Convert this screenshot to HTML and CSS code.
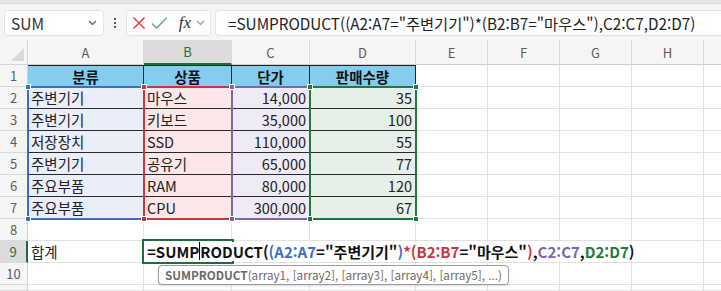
FILE: index.html
```html
<!DOCTYPE html>
<html lang="ko">

<head>
    <meta charset="UTF-8">
    <meta name="viewport" content="width=device-width, initial-scale=1.0">
    <title>SUMPRODUCT</title>
    <link rel="stylesheet" href="styles.css">
</head>

<body>
    <div class="ribbon-edge"></div>
    <div class="formula-bar">
        <div class="namebox">
            <span>SUM</span>
            <svg width="9" height="6" viewBox="0 0 9 6"><path d="M1 1l3.5 3.5L8 1" fill="none" stroke="#555" stroke-width="1.2"/></svg>
        </div>
        <div class="grip">
            <i></i><i></i><i></i>
        </div>
        <div class="fx-buttons">
            <svg width="14" height="14" viewBox="0 0 14 14"><path d="M1.5 1.5l11 11M12.5 1.5l-11 11" stroke="#e0474c" stroke-width="1.6"/></svg>
            <svg width="17" height="14" viewBox="0 0 17 14"><path d="M1 7.5l4.5 4.5L16 1.5" fill="none" stroke="#6fb089" stroke-width="1.6"/></svg>
            <span class="fx">fx</span>
            <svg width="9" height="6" viewBox="0 0 9 6"><path d="M1 1l3.5 3.5L8 1" fill="none" stroke="#999" stroke-width="1.2"/></svg>
        </div>
        <div class="formula-input">=SUMPRODUCT((A2:A7="주변기기")*(B2:B7="마우스"),C2:C7,D2:D7)</div>
    </div>

    <div class="sheet">
        <div class="corner"><span></span></div>
        <div class="col-hd">A</div>
        <div class="col-hd on">B</div>
        <div class="col-hd">C</div>
        <div class="col-hd">D</div>
        <div class="col-hd">E</div>
        <div class="col-hd">F</div>
        <div class="col-hd">G</div>
        <div class="col-hd">H</div>
        <div class="col-hd"></div>

        <div class="row-hd">1</div>
        <div class="cell th">분류</div>
        <div class="cell th">상품</div>
        <div class="cell th">단가</div>
        <div class="cell th">판매수량</div>
        <div class="cell"></div><div class="cell"></div><div class="cell"></div><div class="cell"></div><div class="cell"></div>

        <div class="row-hd">2</div>
        <div class="cell td fa">주변기기</div>
        <div class="cell td fb">마우스</div>
        <div class="cell td fc num">14,000</div>
        <div class="cell td fd num">35</div>
        <div class="cell"></div><div class="cell"></div><div class="cell"></div><div class="cell"></div><div class="cell"></div>

        <div class="row-hd">3</div>
        <div class="cell td fa">주변기기</div>
        <div class="cell td fb">키보드</div>
        <div class="cell td fc num">35,000</div>
        <div class="cell td fd num">100</div>
        <div class="cell"></div><div class="cell"></div><div class="cell"></div><div class="cell"></div><div class="cell"></div>

        <div class="row-hd">4</div>
        <div class="cell td fa">저장장치</div>
        <div class="cell td fb">SSD</div>
        <div class="cell td fc num">110,000</div>
        <div class="cell td fd num">55</div>
        <div class="cell"></div><div class="cell"></div><div class="cell"></div><div class="cell"></div><div class="cell"></div>

        <div class="row-hd">5</div>
        <div class="cell td fa">주변기기</div>
        <div class="cell td fb">공유기</div>
        <div class="cell td fc num">65,000</div>
        <div class="cell td fd num">77</div>
        <div class="cell"></div><div class="cell"></div><div class="cell"></div><div class="cell"></div><div class="cell"></div>

        <div class="row-hd">6</div>
        <div class="cell td fa">주요부품</div>
        <div class="cell td fb">RAM</div>
        <div class="cell td fc num">80,000</div>
        <div class="cell td fd num">120</div>
        <div class="cell"></div><div class="cell"></div><div class="cell"></div><div class="cell"></div><div class="cell"></div>

        <div class="row-hd">7</div>
        <div class="cell td fa">주요부품</div>
        <div class="cell td fb">CPU</div>
        <div class="cell td fc num">300,000</div>
        <div class="cell td fd num">67</div>
        <div class="cell"></div><div class="cell"></div><div class="cell"></div><div class="cell"></div><div class="cell"></div>

        <div class="row-hd">8</div>
        <div class="cell"></div><div class="cell"></div><div class="cell"></div><div class="cell"></div>
        <div class="cell"></div><div class="cell"></div><div class="cell"></div><div class="cell"></div><div class="cell"></div>

        <div class="row-hd on">9</div>
        <div class="cell">합계</div>
        <div class="cell"></div><div class="cell"></div><div class="cell"></div>
        <div class="cell"></div><div class="cell"></div><div class="cell"></div><div class="cell"></div><div class="cell"></div>

        <div class="row-hd">10</div>
        <div class="cell"></div><div class="cell"></div><div class="cell"></div><div class="cell"></div>
        <div class="cell"></div><div class="cell"></div><div class="cell"></div><div class="cell"></div><div class="cell"></div>

        <div class="row-hd"></div>
        <div class="cell"></div><div class="cell"></div><div class="cell"></div><div class="cell"></div>
        <div class="cell"></div><div class="cell"></div><div class="cell"></div><div class="cell"></div><div class="cell"></div>

        <!-- reference highlights while editing -->
        <div class="range ra"><b class="tl"></b><b class="tr"></b><b class="bl"></b><b class="br"></b></div>
        <div class="range rb"><b class="tl"></b><b class="tr"></b><b class="bl"></b><b class="br"></b></div>
        <div class="range rc"><b class="tl"></b><b class="tr"></b><b class="bl"></b><b class="br"></b></div>
        <div class="range rd"><b class="tl"></b><b class="tr"></b><b class="bl"></b><b class="br"></b></div>

        <div class="active"></div>
        <div class="edit">=SUMP<span class="caret"></span>RODUCT(<span class="ka">(A2:A7</span>="주변기기"<span class="ka">)</span><span class="kb">*(B2:B7</span>="마우스"<span class="kb">)</span>,<span class="kc">C2:C7</span>,<span class="kd">D2:D7</span>)</div>
        <div class="tip"><b>SUMPRODUCT</b>(array1, [array2], [array3], [array4], [array5], ...)</div>
    </div>
</body>

</html>
```

FILE: styles.css
```css
* {
    box-sizing: border-box;
}

body {
    margin: 0;
    width: 721px;
    height: 291px;
    overflow: hidden;
    background: #f5f5f5;
    font-family: "Noto Sans CJK KR", sans-serif;
    color: #222;
}

.ribbon-edge {
    height: 4px;
    background: #e6e6e6;
    border-bottom: 1px solid #dcdcdc;
}

.formula-bar {
    height: 36px;
    display: flex;
    align-items: flex-start;
    padding: 6px 0 0 4px;
}

.namebox,
.fx-buttons,
.formula-input {
    height: 26px;
    background: #fff;
    border: 1px solid #e3e3e3;
    border-radius: 4px;
    display: flex;
    align-items: center;
}

.namebox {
    width: 100px;
    justify-content: space-between;
    padding: 0 6px 0 6px;
    font-size: 15.5px;
    color: #333;
}

.grip {
    width: 22px;
    height: 26px;
    display: flex;
    flex-direction: column;
    align-items: center;
    justify-content: center;
    gap: 2px;
}

.grip i {
    width: 2px;
    height: 2px;
    background: #555;
}

.fx-buttons {
    width: 85px;
    padding: 0 5px;
    justify-content: space-between;
}

.fx {
    font-family: "Liberation Serif", serif;
    font-style: italic;
    font-size: 17px;
    color: #333;
    margin-left: 6px;
}

.formula-input {
    flex: 1;
    margin-left: 4px;
    border-right: none;
    border-radius: 4px 0 0 4px;
    padding-left: 12px;
    font-size: 15.3px;
    color: #222;
    white-space: nowrap;
    overflow: hidden;
}

.sheet {
    position: relative;
    display: grid;
    grid-template-columns: 28px 116px 88px 78px 106px 72px 72px 72px 72px 72px;
    grid-template-rows: 25px repeat(10, 22px) 6px;
    width: 721px;
    overflow: hidden;
    font-size: 14.5px;
}

.corner {
    position: relative;
    border-right: 1px solid #d6d6d6;
    border-bottom: 1px solid #d6d6d6;
}

.corner span {
    position: absolute;
    right: 3px;
    bottom: 3px;
    width: 13px;
    height: 13px;
    background: #d9d9d9;
    clip-path: polygon(100% 0, 100% 100%, 0 100%);
}

.col-hd {
    display: flex;
    align-items: center;
    justify-content: center;
    font-size: 13px;
    color: #5c5c5c;
    border-right: 1px solid #dadada;
    border-bottom: 1px solid #cfcfcf;
}

.col-hd.on {
    background: #dcdcdc;
    color: #1b6e3f;
    border-bottom: 2px solid #1b6e3f;
}

.row-hd {
    display: flex;
    align-items: center;
    justify-content: center;
    font-size: 13px;
    color: #5c5c5c;
    border-right: 1px solid #cfcfcf;
    border-bottom: 1px solid #dadada;
}

.row-hd.on {
    background: #dcdcdc;
    color: #1b6e3f;
    border-right: 2px solid #1b6e3f;
}

.cell {
    background: #fff;
    border-right: 1px solid #e1e1e1;
    border-bottom: 1px solid #e1e1e1;
    padding: 0 3px;
    line-height: 21px;
    white-space: nowrap;
}

.th {
    background: #84cdee;
    font-weight: bold;
    text-align: center;
    color: #111;
    border-right-color: #222;
    border-bottom-color: #222;
    border-top: 1px solid #222;
}

.td {
    border-bottom-color: #2a2a2a;
}

.num {
    text-align: right;
}

.fa { background: #e9eef9; }
.fb { background: #fbe7e8; }
.fc { background: #eeeaf6; }
.fd { background: #e6f0e8; }

.range {
    position: absolute;
    top: 46px;
    height: 134px;
    border: 2px solid;
}

.range b {
    position: absolute;
    width: 6px;
    height: 6px;
    border: 1px solid #fff;
}

.range .tl { left: -4px; top: -4px; }
.range .tr { right: -4px; top: -4px; }
.range .bl { left: -4px; bottom: -4px; }
.range .br { right: -4px; bottom: -4px; }

.ra { left: 27px; width: 118px; border-color: #3d6fc0; }
.rb { left: 143px; width: 90px; border-color: #c4383f; }
.rc { left: 231px; width: 80px; border-color: #8064a8; }
.rd { left: 309px; width: 108px; border-color: #1f7a3c; }

.ra b { background: #3d6fc0; }
.rb b { background: #c4383f; }
.rc b { background: #8064a8; }
.rd b { background: #1f7a3c; }

.active {
    position: absolute;
    left: 142px;
    top: 199px;
    width: 92px;
    height: 25px;
    border: 2px solid #1b6e3f;
}

.edit {
    position: absolute;
    left: 145px;
    top: 202px;
    height: 19px;
    line-height: 19px;
    padding: 0 2px;
    background: #fff;
    font-weight: bold;
    font-size: 15px;
    color: #111;
    white-space: nowrap;
}

.caret {
    display: inline-block;
    width: 1px;
    height: 18px;
    background: #000;
    vertical-align: top;
}

.ka { color: #3d6fc0; }
.kb { color: #c4383f; }
.kc { color: #8064a8; }
.kd { color: #1f7a3c; }

.tip {
    position: absolute;
    left: 158px;
    top: 225px;
    height: 20px;
    line-height: 18px;
    padding: 0 6px;
    background: #fff;
    border: 1px solid #9c9c9c;
    border-radius: 4px;
    font-size: 11.7px;
    color: #6a6a6a;
    white-space: nowrap;
    box-shadow: 0 1px 2px rgba(0, 0, 0, 0.15);
}

.tip b {
    color: #6a6a6a;
}
```
